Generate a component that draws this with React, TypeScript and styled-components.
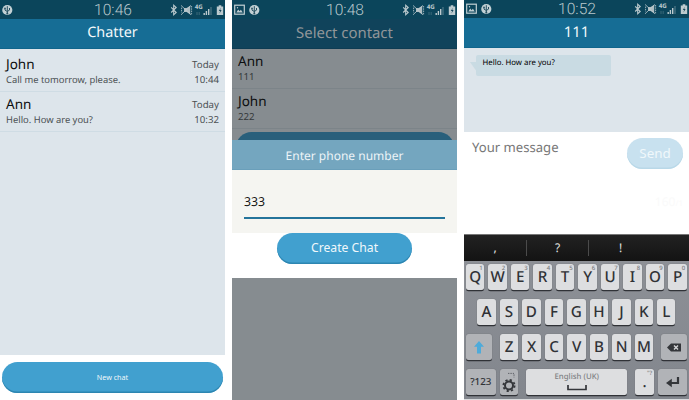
import React from 'react';
import styled, { createGlobalStyle } from 'styled-components';

const GlobalStyle = createGlobalStyle`
  * { box-sizing: border-box; }
  body {
    margin: 0;
    background: #fff;
    font-family: "Noto Sans", sans-serif;
    text-rendering: geometricPrecision;
    overflow: hidden;
  }
`;

const Screens = styled.main`
  display: flex;
  gap: 7px;
  width: 689px;
  height: 400px;
`;

const Phone = styled.section`
  position: relative;
  display: flex;
  flex-direction: column;
  width: 225px;
  height: 400px;
  overflow: hidden;
  background: #fff;
`;

const StatusBar = styled.header<{ $height: number }>`
  display: grid;
  grid-template-columns: 92px 42px 1fr;
  align-items: center;
  flex: none;
  height: ${p => p.$height}px;
  background: #0b455b;
  color: #b9c8cd;
`;

const Notices = styled.div`
  display: flex;
  gap: 4px;
  padding-left: 2px;
`;

const Clock = styled.time`
  font: 300 15.6px/18px Roboto, sans-serif;
  text-align: center;
  white-space: nowrap;
`;

const Indicators = styled.svg`
  display: block;
  width: 91px;
  height: 18px;
`;

const TitleBar = styled.h1<{ $dim?: boolean; $size?: number }>`
  flex: none;
  height: 30px;
  margin: 0;
  border-bottom: 1px solid ${p => (p.$dim ? '#0e3c53' : '#10658c')};
  background: ${p => (p.$dim ? '#10435b' : '#166d95')};
  color: ${p => (p.$dim ? '#909699' : '#f2f8fa')};
  font-size: ${p => p.$size ?? 14.9}px;
  font-weight: 400;
  line-height: 28px;
  text-align: center;
`;

const List = styled.ul<{ $dim?: boolean; $top?: number }>`
  flex: 1;
  margin: 0;
  padding: ${p => p.$top ?? 0}px 0 0;
  list-style: none;
  background: ${p => (p.$dim ? '#868c90' : '#dde5eb')};
`;

const Row = styled.li<{ $dim?: boolean }>`
  display: grid;
  grid-template-columns: 1fr auto;
  grid-template-rows: 16px 14px;
  height: 40px;
  padding: 4px 6px 0;
  border-bottom: 1px solid ${p => (p.$dim ? '#7c8489' : '#cfdce4')};
`;

const Name = styled.strong`
  color: #0c0e0f;
  font-size: 13.5px;
  font-weight: 400;
  line-height: 17px;
`;

const Detail = styled.span<{ $dim?: boolean; $end?: boolean; $low?: boolean }>`
  color: ${p => (p.$dim ? '#34383a' : '#4c5154')};
  font-size: ${p => (p.$end || p.$dim ? 9.7 : 9.4)}px;
  line-height: ${p => (p.$low ? 18 : 16)}px;
  text-align: ${p => (p.$end ? 'right' : 'left')};
`;

const Footer = styled.footer`
  flex: none;
  height: 45px;
  padding: 7px 2px 0;
`;

const PillButton = styled.button<{ $width: string; $size: number; $tone?: 'pale' | 'dark' }>`
  display: block;
  width: ${p => p.$width};
  height: 31px;
  margin: 0 auto;
  padding: 0 0 2px;
  border: 0;
  border-radius: 16px;
  background: ${p => (p.$tone === 'pale' ? '#c8e1ef' : p.$tone === 'dark' ? '#295f7b' : '#41a0cf')};
  box-shadow: inset 0 -1.5px 0 ${p => (p.$tone === 'pale' ? '#b9d8e8' : p.$tone === 'dark' ? '#20536d' : '#2d86b1')};
  color: #f0f8fb;
  font: 400 ${p => p.$size}px/28px "Noto Sans", sans-serif;
`;

const PickerAction = styled.li`
  padding-top: 3px;
`;

const Backdrop = styled.div`
  position: absolute;
  inset: 140px 0 auto;
`;

const Dialog = styled.div`
  height: 138px;
  background: #fff;
`;

const DialogTitle = styled.h2`
  height: 30px;
  margin: 0;
  border-bottom: 1px solid #6a9fba;
  background: #74a6bf;
  color: #edf4f7;
  font-size: 12px;
  font-weight: 400;
  line-height: 31px;
  text-align: center;
`;

const DialogBody = styled.div`
  height: 63px;
  padding: 19px 12px 0;
  background: #f5f5f1;
`;

const NumberField = styled.div`
  height: 30px;
  border-bottom: 2px solid #24749b;
  color: #151515;
  font-size: 12.3px;
  line-height: 25px;
`;

const Conversation = styled.div`
  flex: none;
  height: 84px;
  padding: 7px 0 0 12px;
  background: #dde5eb;
`;

const Bubble = styled.p`
  position: relative;
  width: 135px;
  height: 21px;
  margin: 0;
  padding-left: 6.5px;
  border-radius: 2px;
  background: #c9dbe3;
  color: #000;
  font-size: 7.8px;
  line-height: 17px;

  &::before {
    content: '';
    position: absolute;
    top: 7px;
    left: -6px;
    border-top: 0 solid transparent;
    border-right: 7px solid #c9dbe3;
    border-bottom: 10px solid transparent;
  }
`;

const Composer = styled.div`
  display: grid;
  grid-template-columns: 1fr 56px;
  grid-template-rows: 55px 1fr;
  flex: none;
  height: 102px;
  padding: 6px 6px 0 8px;
  background: #fff;
`;

const Placeholder = styled.span`
  color: #777;
  font-size: 13.1px;
  line-height: 19px;
`;

const Counter = styled.span`
  grid-column: 2;
  color: #fafafa;
  font-size: 12px;
  text-align: right;
  line-height: 17px;
  small { font-size: 8px; }
`;

const Keyboard = styled.div`
  flex: 1;
  background: linear-gradient(#8f9298, #82868d);
  border-bottom: 1px solid #d9dbdd;
`;

const Suggestions = styled.div`
  display: grid;
  grid-template-columns: 63px 62px 63px;
  align-items: center;
  height: 27px;
  border-top: 1px solid #777;
  background: linear-gradient(#222, #131313);
`;

const Suggestion = styled.span<{ $last?: boolean }>`
  height: 16px;
  border-right: ${p => (p.$last ? 0 : 1)}px solid #4b4b4b;
  color: #e4e4e4;
  font-size: 12px;
  line-height: 16px;
  text-align: center;
`;

const KeyRows = styled.div`
  display: grid;
  gap: 8px;
  padding-top: 3px;
`;

const KeyRow = styled.div<{ $indent: number; $columns: string }>`
  display: grid;
  grid-template-columns: ${p => p.$columns};
  column-gap: 4.2px;
  height: 27px;
  padding-left: ${p => p.$indent}px;
`;

const Key = styled.div<{ $muted?: boolean; $size?: number; $end?: boolean }>`
  display: grid;
  grid-template: 100% / 100%;
  place-items: center;
  height: 26px;
  margin-left: ${p => (p.$end ? 4 : 0)}px;
  border-radius: 2.5px;
  background: ${p => (p.$muted ? '#b1b3b7' : '#dddee0')};
  box-shadow: 0 1.2px 0 #303237, 0 0 1px #5a5c62;
  color: #303236;
  font-size: ${p => p.$size ?? 15.2}px;
  font-weight: 500;
  line-height: 26px;
  & > * { grid-area: 1 / 1; }
`;

const ShiftKey = styled(Key)`
  width: 25.8px;
`;

const Hint = styled.sup`
  align-self: start;
  justify-self: end;
  padding-right: 1.5px;
  color: #7b7d81;
  font-size: 6px;
  line-height: 8px;
  vertical-align: baseline;
`;

const SpaceLabel = styled.span`
  align-self: start;
  color: #808285;
  font-size: 7.8px;
  font-weight: 500;
  line-height: 17px;
`;

const Glyph = styled.svg`
  display: block;
  overflow: visible;
`;

const UsbNotice = () => (
  <Glyph width="11" height="12" viewBox="0 0 11 12">
    <circle cx="5.3" cy="6" r="5.1" fill="#c2d0d4" />
    <path d="M5.3 2.2v7.2M3 4v2.1l2.3 1.4 2.2-1.4V4" fill="none" stroke="#254f60" />
    <circle cx="3" cy="4.2" r=".8" fill="#254f60" />
    <circle cx="5.3" cy="9.4" r="1" fill="#254f60" />
  </Glyph>
);

const PictureNotice = () => (
  <Glyph width="11" height="12" viewBox="0 0 11 12">
    <rect x=".7" y="1.2" width="9.6" height="9" fill="none" stroke="#c2d0d4" strokeWidth="1.2" />
    <path d="M2.3 8.5 4.2 5.6l1.4 1.6 1.3-1.5 1.9 2.8z" fill="#c2d0d4" />
    <circle cx="3.5" cy="3.8" r=".7" fill="#c2d0d4" />
  </Glyph>
);

const Status = ({ time, height = 19, picture }: { time: string; height?: number; picture?: boolean }) => (
  <StatusBar $height={height}>
    <Notices>
      {picture && <PictureNotice />}
      <UsbNotice />
    </Notices>
    <Clock>{time}</Clock>
    <Indicators viewBox="0 0 91 18" fill="none" stroke="#bccace">
      <path d="m37.2 6.3 5 5.2-2.5 2.3V4.2l2.5 2.3-5 5" strokeWidth="1.1" />
      <path d="M56.2 4.8v8.6L52.6 11H50V7h2.6z" fill="#aebdc2" stroke="none" />
      <path d="m47 4.4 10 9.4m0-9.4-10 9.4" strokeWidth=".8" />
      <path d="M47.6 6.6v5m10-6.6v8.6" strokeWidth=".8" strokeDasharray="1.5 .8" />
      <text x="60.8" y="8.4" fill="#bccace" stroke="none" fontSize="6.2" fontWeight="700" fontFamily="Noto Sans, sans-serif">4G</text>
      <path d="M63 11v3m2.2-3v3" strokeWidth=".7" opacity=".4" />
      <path d="M70.2 12v2m2.2-4v4m2.3-6v6" strokeWidth="1.4" />
      <path d="M77 6v8" strokeWidth="1.2" opacity=".4" />
      <path d="M84.7 4.2h2.6v1.3h1.9V14h-6.4V5.5h1.9z" fill="#bccace" stroke="none" />
      <path d="m86.8 6.8-2 3.3h1.3l-.6 2.5 2.1-3.5h-1.4z" fill="#16475a" stroke="none" />
    </Indicators>
  </StatusBar>
);

const chats = [
  { name: 'John', text: 'Call me tomorrow, please.', time: '10:44' },
  { name: 'Ann', text: 'Hello. How are you?', time: '10:32' },
];

const contacts = [
  { name: 'Ann', number: '111' },
  { name: 'John', number: '222' },
];

const ChatList = () => (
  <Phone>
    <Status time="10:46" />
    <TitleBar $size={14.4}>Chatter</TitleBar>
    <List $top={3}>
      {chats.map(c => (
        <Row key={c.name}>
          <Name>{c.name}</Name>
          <Detail $end $low>Today</Detail>
          <Detail>{c.text}</Detail>
          <Detail $end>{c.time}</Detail>
        </Row>
      ))}
    </List>
    <Footer>
      <PillButton $width="221px" $size={7.2}>New chat</PillButton>
    </Footer>
  </Phone>
);

const ContactPicker = () => (
  <Phone>
    <Status time="10:48" picture />
    <TitleBar $dim>Select contact</TitleBar>
    <List $dim>
      {contacts.map(c => (
        <Row key={c.name} $dim>
          <Name>{c.name}</Name>
          <span />
          <Detail $dim>{c.number}</Detail>
        </Row>
      ))}
      <PickerAction>
        <PillButton $width="218px" $size={12} $tone="dark" />
      </PickerAction>
    </List>
    <Backdrop>
      <Dialog role="dialog">
        <DialogTitle>Enter phone number</DialogTitle>
        <DialogBody><NumberField>333</NumberField></DialogBody>
        <PillButton $width="135px" $size={12.2}>Create Chat</PillButton>
      </Dialog>
    </Backdrop>
  </Phone>
);

const KeyboardPanel = () => (
  <Keyboard>
    <Suggestions>
      <Suggestion>,</Suggestion>
      <Suggestion>?</Suggestion>
      <Suggestion $last>!</Suggestion>
    </Suggestions>
    <KeyRows>
      <KeyRow $indent={2} $columns="repeat(10, 18.3px)">
        {'QWERTYUIOP'.split('').map((k, i) => <Key key={k}><span>{k}</span><Hint>{(i + 1) % 10}</Hint></Key>)}
      </KeyRow>
      <KeyRow $indent={13.3} $columns="repeat(9, 18.3px)">
        {'ASDFGHJKL'.split('').map(k => <Key key={k}><span>{k}</span></Key>)}
      </KeyRow>
      <KeyRow $indent={2} $columns="29.8px repeat(7, 18.3px) 29.6px">
        <ShiftKey $muted>
          <Glyph width="12" height="13" viewBox="0 0 12 13"><path d="M6 0 11 5.8H8V12.5H4V5.8H1z" fill="#4eabda" /></Glyph>
        </ShiftKey>
        {'ZXCVBNM'.split('').map(k => <Key key={k}><span>{k}</span></Key>)}
        <Key $muted $end>
          <Glyph width="14" height="9" viewBox="0 0 14 9">
            <path d="M0 4.5 4 .6h10v7.8H4z" fill="#34363a" />
            <path d="m7 2.5 4 4m0-4-4 4" stroke="#d5d6d8" strokeWidth="1.4" />
          </Glyph>
        </Key>
      </KeyRow>
      <KeyRow $indent={2} $columns="29.6px 18.3px 105px 22.3px 29.4px">
        <Key $muted $size={9.8}><span>?123</span></Key>
        <Key $muted>
          <Glyph width="16" height="24" viewBox="0 0 16 24" fill="none" stroke="#34363a">
            <circle cx="8" cy="15.5" r="4" strokeWidth="2" />
            <circle cx="8" cy="15.5" r="5.6" strokeWidth="1.8" strokeDasharray="2.2 2.2" />
            <path d="M7 3.4h6m0 1v3" stroke="#606268" strokeDasharray="1.4 1" />
          </Glyph>
        </Key>
        <Key $end>
          <SpaceLabel>English (UK)</SpaceLabel>
          <Glyph width="20" height="26" viewBox="0 0 20 26"><path d="M1 16v4.5h18V16" fill="none" stroke="#34363a" strokeWidth="1.7" /></Glyph>
        </Key>
        <Key $end><span>.</span><Hint>"?</Hint></Key>
        <Key $muted>
          <Glyph width="14" height="13" viewBox="0 0 14 13">
            <path d="M12 1v6H5" fill="none" stroke="#34363a" strokeWidth="2.2" />
            <path d="M0 7 5.8 2.7v8.6z" fill="#34363a" />
          </Glyph>
        </Key>
      </KeyRow>
    </KeyRows>
  </Keyboard>
);

const ChatScreen = () => (
  <Phone>
    <Status time="10:52" height={18} picture />
    <TitleBar>111</TitleBar>
    <Conversation><Bubble>Hello. How are you?</Bubble></Conversation>
    <Composer>
      <Placeholder>Your message</Placeholder>
      <PillButton $width="56px" $size={13.4} $tone="pale">Send</PillButton>
      <Counter>160<small>/1</small></Counter>
    </Composer>
    <KeyboardPanel />
  </Phone>
);

export default function App() {
  return (
    <>
      <GlobalStyle />
      <Screens>
        <ChatList />
        <ContactPicker />
        <ChatScreen />
      </Screens>
    </>
  );
}
